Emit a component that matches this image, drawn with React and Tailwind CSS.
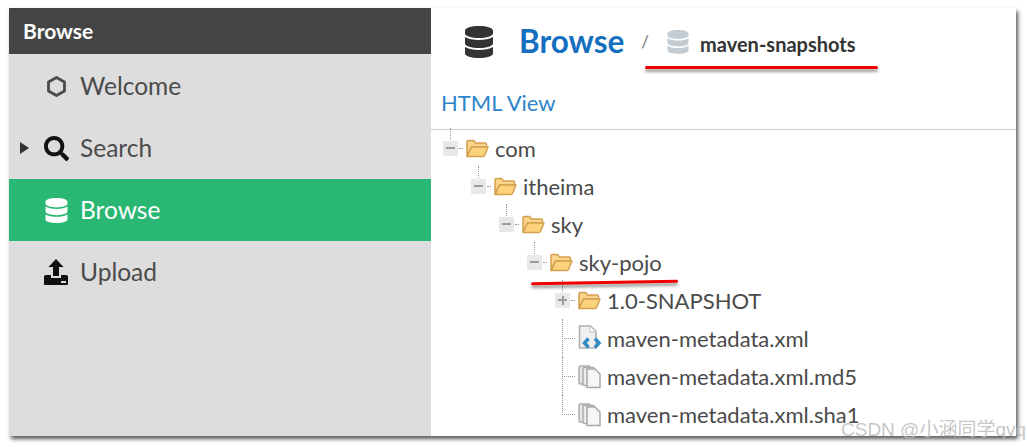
import React from 'react'
import { FaDatabase, FaSearch } from 'react-icons/fa'

const font = { fontFamily: 'Lato, sans-serif' }

function Hexagon() {
  return (
    <svg width="21" height="23" viewBox="0 0 21 23" fill="none">
      <path d="M10.5 2.5 18.5 7v9l-8 4.5-8-4.5V7z" stroke="#4a4a4a" strokeWidth="2.8" strokeLinejoin="round" />
    </svg>
  )
}

function UploadIcon() {
  return (
    <svg width="26" height="27" viewBox="0 0 26 27">
      <path d="M13 0 20.500 8H16v9h-6V8H5.500z" fill="#111" />
      <path d="M1 17.500Q1 16 3 16h5v3h10v-3h5q2 0 2 1.500V25q0 1-1.500 1h-22Q1 26 1 25z" fill="#111" />
      <rect x="18" y="22" width="5" height="2" fill="#ddd" />
    </svg>
  )
}

function Folder() {
  return (
    <svg width="23" height="19" viewBox="0 0 23 19" className="shrink-0">
      <path d="M1 3q0-1.500 1.500-1.500h5L9.500 4H19q1.500 0 1.500 1.500V8H6L1 16z" fill="#f9d48a" stroke="#d3a050" strokeWidth="1.500" />
      <path d="M1.200 17.500 5.500 8H22l-3.500 8.500q-.4 1-1.500 1z" fill="#fcd27a" stroke="#d3a050" strokeWidth="1.500" strokeLinejoin="round" />
    </svg>
  )
}

function XmlFile() {
  return (
    <svg width="24" height="26" viewBox="0 0 24 26" className="shrink-0">
      <path d="M1.500 1h11L18 6.500V23H1.500z" fill="#efefef" stroke="#b0b0b0" strokeWidth="1.600" />
      <path d="M12 1.500V7h5.500" fill="#fff" stroke="#c0c0c0" />
      <path d="M10.500 13.500 6.500 18l4 4.500" fill="none" stroke="#2f8ac6" strokeWidth="3.400" />
      <path d="M17 13.500 21 18l-4 4.500" fill="none" stroke="#2f8ac6" strokeWidth="3.400" />
    </svg>
  )
}

function FilesIcon() {
  return (
    <svg width="24" height="25" viewBox="0 0 24 25" className="shrink-0">
      <rect x="1" y="2" width="11" height="18" rx="1" fill="#e6e6e6" stroke="#adadad" strokeWidth="1.500" />
      <rect x="5" y="3.500" width="11" height="18" rx="1" fill="#ececec" stroke="#adadad" strokeWidth="1.500" />
      <path d="M9 5h8l5 5v13.500H9z" fill="#f6f6f6" stroke="#a8a8a8" strokeWidth="1.500" />
    </svg>
  )
}

function Expander({ open }) {
  return (
    <span className="relative flex h-[15px] w-[15px] shrink-0 items-center justify-center bg-[#e6e8ea]">
      <span className="h-[2px] w-[9px] bg-[#9a9a9a]" />
      {!open && <span className="absolute h-[9px] w-[2px] bg-[#9a9a9a]" />}
      <span className="absolute left-[7px] top-[-13px] h-[12px] border-l border-dotted border-[#999]" />
      <span className="absolute left-[16px] top-[7px] w-[4px] border-t border-dotted border-[#999]" />
    </span>
  )
}

function Leaf({ last }) {
  return (
    <span className="relative flex h-[15px] w-[15px] shrink-0 items-center">
      <span className={`absolute left-[7px] top-[-12px] border-l border-dotted border-[#999] ${last ? 'h-[20px]' : 'h-[38px]'}`} />
      <span className="absolute left-[7px] top-[7px] w-[13px] border-t border-dotted border-[#999]" />
    </span>
  )
}

const nodes = [
  { label: 'com', pad: 'pl-[12px]', kind: 'open' },
  { label: 'itheima', pad: 'pl-[40px]', kind: 'open' },
  { label: 'sky', pad: 'pl-[68px]', kind: 'open' },
  { label: 'sky-pojo', pad: 'pl-[96px]', kind: 'open' },
  { label: '1.0-SNAPSHOT', pad: 'pl-[124px]', kind: 'closed' },
  { label: 'maven-metadata.xml', pad: 'pl-[124px]', kind: 'xml' },
  { label: 'maven-metadata.xml.md5', pad: 'pl-[124px]', kind: 'file' },
  { label: 'maven-metadata.xml.sha1', pad: 'pl-[124px]', kind: 'last' },
]

function TreeRow({ node }) {
  const isFolder = node.kind === 'open' || node.kind === 'closed'
  return (
    <div className={`flex h-[38px] items-center pb-[2px] text-[22px] text-[#4a4a4a] ${node.pad}`}>
      {isFolder ? <Expander open={node.kind === 'open'} /> : <Leaf last={node.kind === 'last'} />}
      <span className="ml-[8px] flex w-[29px] shrink-0">
        {isFolder && <Folder />}
        {node.kind === 'xml' && <XmlFile />}
        {(node.kind === 'file' || node.kind === 'last') && <FilesIcon />}
      </span>
      <span>{node.label}</span>
    </div>
  )
}

function NavItem({ icon, label, active, arrow, className }) {
  return (
    <div className={`flex items-center text-[24.5px] ${active ? 'bg-[#2ab673] text-white' : 'text-[#4b4b4b]'} ${className}`}>
      <span className="flex w-[29px] shrink-0 justify-center pl-[2px]">
        {arrow && <span className="h-0 w-0 border-y-[6px] border-l-[9px] border-y-transparent border-l-[#333]" />}
      </span>
      <span className="flex w-[36px] shrink-0 justify-center">{icon}</span>
      <span className="ml-[6px]">{label}</span>
    </div>
  )
}

export default function App() {
  return (
    <div className="relative h-[447px] w-[1027px] overflow-hidden bg-white" style={font}>
      <div className="ml-[9px] mt-[8px] flex h-[428px] w-[1007px] bg-white shadow-[2px_3px_4px_rgba(0,0,0,0.65)]">
        {/* Sidebar */}
        <div className="w-[422px] shrink-0 bg-[#dddddd]">
          <div className="flex h-[46px] items-center bg-[#444444] pl-[14px] text-[21px] font-bold text-white">Browse</div>
          <NavItem label="Welcome" icon={<Hexagon />} className="h-[65px]" />
          <NavItem label="Search" arrow icon={<FaSearch size={25} color="#111" />} className="h-[60px] pb-[2px]" />
          <NavItem label="Browse" active icon={<FaDatabase size={25} color="#fff" />} className="h-[62px]" />
          <NavItem label="Upload" icon={<UploadIcon />} className="h-[62px]" />
        </div>

        {/* Main panel */}
        <div className="min-w-0 flex-1">
          <div className="flex h-[70px] items-center pb-[2px] pl-[32px]">
            <FaDatabase size={32} color="#333" />
            <span className="ml-[24px] text-[31.5px] font-bold text-[#1470bf]">Browse</span>
            <span className="ml-[17px] text-[17px] text-[#777]">/</span>
            <FaDatabase size={24} color="#c3ccd2" className="ml-[17px]" />
            <span className="ml-[10px] mt-[4px] text-[20px] font-bold text-[#333]">maven-snapshots</span>
          </div>
          <div className="flex h-[52px] items-center border-b border-[#cccccc] pb-[2px] pl-[10px] text-[22px] text-[#2d84c9]">HTML View</div>
          <div>
            {nodes.map(node => <TreeRow key={node.label} node={node} />)}
          </div>
        </div>
      </div>

      {/* Red annotation strokes */}
      <div className="absolute left-[645px] top-[66px] h-[3px] w-[233px] rounded-full bg-[#f00000] shadow-[0_3px_3px_rgba(0,0,0,0.4)]" />
      <div className="absolute left-[531px] top-[281px] h-[3px] w-[147px] -rotate-[1deg] rounded-full bg-[#f00000] shadow-[0_3px_3px_rgba(0,0,0,0.4)]" />

      {/* Watermark */}
      <div
        className="absolute left-[841px] top-[418px] text-[19px] leading-[24px] whitespace-nowrap text-[#b8b8b8]/80"
        style={{ fontFamily: '"Liberation Sans", "Noto Sans CJK SC", sans-serif' }}
      >
        CSDN @小涵同学qvq
      </div>
    </div>
  )
}
